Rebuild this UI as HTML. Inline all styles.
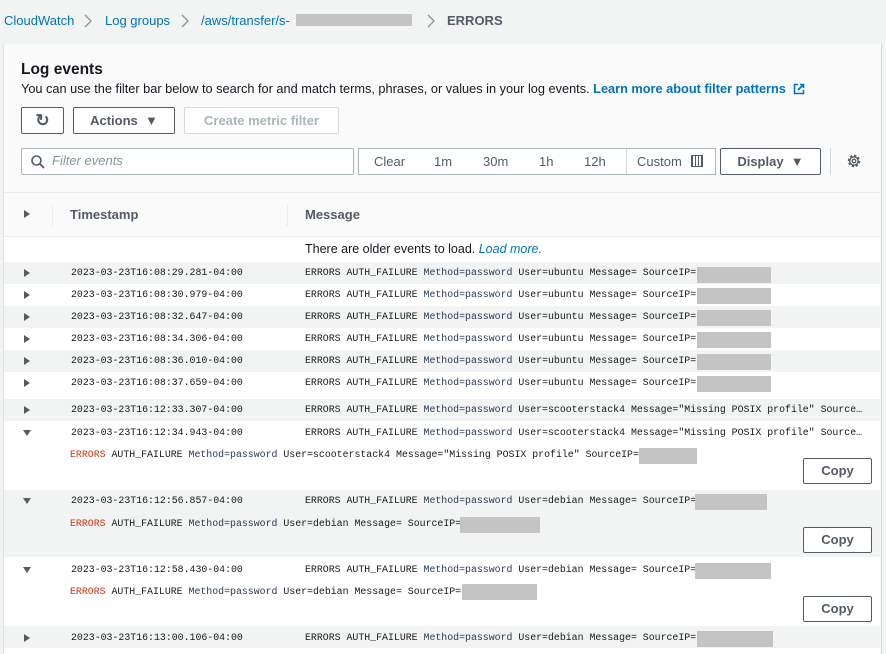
<!DOCTYPE html><html><head><style>
body{margin:0;width:886px;height:654px;overflow:hidden;background:#f2f3f3;font-family:"Liberation Sans",sans-serif;position:relative}
.a{position:absolute}
.bc{top:13px;font-size:13px;color:#0073bb}
.pn{left:3px;top:44px;width:877px;height:610px;background:#fafafa;border-left:1px solid #e1e4e4;border-right:1px solid #d5dbdb}
.btn{position:absolute;border:1px solid #545b64;border-radius:2px;background:#fff;box-sizing:border-box;font-weight:bold;font-size:13px;color:#545b64;text-align:center}
.row{position:absolute;left:4px;width:876px;height:22px}
.g{background:#f2f3f3}.w{background:#fff}
.m{font-family:"Liberation Mono",monospace;font-size:9.9px;color:#16191f;position:absolute;white-space:pre}
.tri{position:absolute;left:24px;width:0;height:0;border-top:4px solid transparent;border-bottom:4px solid transparent;border-left:6px solid #545b64}
.tdn{position:absolute;left:23px;width:0;height:0;border-left:4px solid transparent;border-right:4px solid transparent;border-top:6px solid #545b64}
.red{position:absolute;background:#c4c4c4;height:16px}
.cp{position:absolute;left:803px;width:69px;height:26px;border:1px solid #545b64;border-radius:2px;background:#fff;box-sizing:border-box;font-weight:bold;font-size:13px;color:#545b64;text-align:center;line-height:24px}
.e{color:#d13212}.b{color:#2a3a55}
.ch{position:absolute;top:14px}
</style></head><body>
<div class="a bc" style="left:4px">CloudWatch</div>
<svg class="ch" style="left:84px" width="8" height="14"><path d="M1 1 L7 7 L1 13" fill="none" stroke="#879596" stroke-width="1.3"/></svg>
<div class="a bc" style="left:105px">Log groups</div>
<svg class="ch" style="left:181px" width="8" height="14"><path d="M1 1 L7 7 L1 13" fill="none" stroke="#879596" stroke-width="1.3"/></svg>
<div class="a bc" style="left:201px">/aws/transfer/s-</div>
<div class="a" style="left:296px;top:14px;width:116px;height:12px;background:#c4c4c4"></div>
<svg class="ch" style="left:427px" width="8" height="14"><path d="M1 1 L7 7 L1 13" fill="none" stroke="#879596" stroke-width="1.3"/></svg>
<div class="a bc" style="left:447px;color:#545b64;font-weight:bold">ERRORS</div>
<div class="a pn"></div>
<div class="a" style="left:21px;top:61px;font-size:15.5px;font-weight:bold;color:#16191f">Log events</div>
<div class="a" style="left:21px;top:81px;font-size:12.75px;color:#16191f;white-space:nowrap">You can use the filter bar below to search for and match terms, phrases, or values in your log events. <b style="color:#0073bb">Learn more about filter patterns</b></div>
<svg class="a" style="left:793px;top:83px" width="12" height="12"><path d="M5 1.5H1.5V10.5H10.5V7" fill="none" stroke="#0073bb" stroke-width="1.6"/><path d="M7 1.5H10.5V5M10.5 1.5L5 7" fill="none" stroke="#0073bb" stroke-width="1.6"/></svg>
<div class="btn" style="left:21px;top:107px;width:43px;height:27px;line-height:25px;font-size:17px">↻</div>
<div class="btn" style="left:73px;top:107px;width:102px;height:27px;line-height:25px">Actions &nbsp;▼</div>
<div class="btn" style="left:184px;top:107px;width:155px;height:27px;line-height:25px;border-color:#d5dbdb;color:#aab7b8">Create metric filter</div>
<div class="a" style="left:21px;top:148px;width:333px;height:27px;border:1px solid #aab7b8;border-radius:2px;background:#fff;box-sizing:border-box"></div>
<svg class="a" style="left:30px;top:154px" width="16" height="16"><circle cx="6.5" cy="6.5" r="4.5" fill="none" stroke="#545b64" stroke-width="1.6"/><line x1="10" y1="10" x2="14" y2="14" stroke="#545b64" stroke-width="1.8"/></svg>
<div class="a" style="left:52px;top:153px;font-size:13px;font-style:italic;color:#879596">Filter events</div>
<div class="a" style="left:358px;top:148px;width:358px;height:27px;border:1px solid #aab7b8;background:#fff;box-sizing:border-box"></div>
<div class="a" style="left:626px;top:149px;width:1px;height:25px;background:#d5dbdb"></div>
<div class="a" style="top:154px;left:374px;font-size:13px;color:#545b64">Clear</div>
<div class="a" style="top:154px;left:434px;font-size:13px;color:#545b64">1m</div>
<div class="a" style="top:154px;left:483px;font-size:13px;color:#545b64">30m</div>
<div class="a" style="top:154px;left:539px;font-size:13px;color:#545b64">1h</div>
<div class="a" style="top:154px;left:584px;font-size:13px;color:#545b64">12h</div>
<div class="a" style="top:154px;left:637px;font-size:13px;color:#545b64">Custom</div>
<div class="a" style="left:691px;top:155px;width:10px;height:10px;border:1px solid #545b64;background:repeating-linear-gradient(90deg,#545b64 0 1px,#fff 1px 3px)"></div>
<div class="btn" style="left:720px;top:148px;width:101px;height:27px;line-height:25px">Display &nbsp;▼</div>
<div class="a" style="left:830px;top:148px;width:1px;height:27px;background:#d5dbdb"></div>
<svg class="a" style="left:846px;top:153px" width="16" height="16"><circle cx="8" cy="8" r="5" fill="none" stroke="#545b64" stroke-width="2.4" stroke-dasharray="2.2 1.7"/><circle cx="8" cy="8" r="4.2" fill="none" stroke="#545b64" stroke-width="1.3"/><circle cx="8" cy="8" r="1.8" fill="none" stroke="#545b64" stroke-width="1.3"/></svg>
<div class="a" style="left:4px;top:192px;width:876px;height:1px;background:#eaeded"></div>
<div class="tri" style="top:210px"></div>
<div class="a" style="left:52px;top:204px;width:1px;height:22px;background:#eaeded"></div>
<div class="a" style="left:70px;top:207px;font-size:13px;font-weight:bold;color:#545b64">Timestamp</div>
<div class="a" style="left:287px;top:204px;width:1px;height:22px;background:#eaeded"></div>
<div class="a" style="left:305px;top:207px;font-size:13px;font-weight:bold;color:#545b64">Message</div>
<div class="row w" style="top:236px;height:26px;border-top:1px solid #eaeded"></div>
<div class="a" style="left:305px;top:242px;font-size:12.5px;color:#16191f">There are older events to load. <i style="color:#0073bb">Load more.</i></div>

<div class="row g" style="top:262px"></div><div class="tri" style="top:269px"></div><div class="m" style="left:71px;top:267px">2023-03-23T16:08:29.281-04:00</div><div class="m" style="left:305px;top:267px">ERRORS AUTH_FAILURE <span class="b">Method=password</span> User=ubuntu Message= SourceIP=</div><div class="red" style="left:697px;top:267px;width:74px"></div>
<div class="row w" style="top:284px"></div><div class="tri" style="top:291px"></div><div class="m" style="left:71px;top:289px">2023-03-23T16:08:30.979-04:00</div><div class="m" style="left:305px;top:289px">ERRORS AUTH_FAILURE <span class="b">Method=password</span> User=ubuntu Message= SourceIP=</div><div class="red" style="left:697px;top:288px;width:74px"></div>
<div class="row g" style="top:306px"></div><div class="tri" style="top:313px"></div><div class="m" style="left:71px;top:311px">2023-03-23T16:08:32.647-04:00</div><div class="m" style="left:305px;top:311px">ERRORS AUTH_FAILURE <span class="b">Method=password</span> User=ubuntu Message= SourceIP=</div><div class="red" style="left:697px;top:310px;width:74px"></div>
<div class="row w" style="top:328px"></div><div class="tri" style="top:335px"></div><div class="m" style="left:71px;top:333px">2023-03-23T16:08:34.306-04:00</div><div class="m" style="left:305px;top:333px">ERRORS AUTH_FAILURE <span class="b">Method=password</span> User=ubuntu Message= SourceIP=</div><div class="red" style="left:697px;top:332px;width:74px"></div>
<div class="row g" style="top:350px"></div><div class="tri" style="top:357px"></div><div class="m" style="left:71px;top:355px">2023-03-23T16:08:36.010-04:00</div><div class="m" style="left:305px;top:355px">ERRORS AUTH_FAILURE <span class="b">Method=password</span> User=ubuntu Message= SourceIP=</div><div class="red" style="left:697px;top:354px;width:74px"></div>
<div class="row w" style="top:372px;height:27px"></div><div class="tri" style="top:379px"></div><div class="m" style="left:71px;top:377px">2023-03-23T16:08:37.659-04:00</div><div class="m" style="left:305px;top:377px">ERRORS AUTH_FAILURE <span class="b">Method=password</span> User=ubuntu Message= SourceIP=</div><div class="red" style="left:697px;top:376px;width:74px"></div>
<div class="row g" style="top:399px"></div><div class="tri" style="top:406px"></div><div class="m" style="left:71px;top:404px">2023-03-23T16:12:33.307-04:00</div><div class="m" style="left:305px;top:404px">ERRORS AUTH_FAILURE <span class="b">Method=password</span> User=scooterstack4 Message="Missing POSIX profile" Source…</div>
<div class="row w" style="top:421px;height:69px"></div><div class="tdn" style="top:430px"></div><div class="m" style="left:71px;top:427px">2023-03-23T16:12:34.943-04:00</div><div class="m" style="left:305px;top:427px">ERRORS AUTH_FAILURE <span class="b">Method=password</span> User=scooterstack4 Message="Missing POSIX profile" Source…</div>
<div class="m" style="left:70px;top:449px"><span class="e">ERRORS</span> AUTH_FAILURE <span class="b">Method=password</span> User=scooterstack4 Message="Missing POSIX profile" SourceIP=</div><div class="red" style="left:639px;top:448px;width:58px"></div>
<div class="cp" style="top:458px">Copy</div>
<div class="row g" style="top:490px;height:67px"></div><div class="tdn" style="top:498px"></div><div class="m" style="left:71px;top:495px">2023-03-23T16:12:56.857-04:00</div><div class="m" style="left:305px;top:495px">ERRORS AUTH_FAILURE <span class="b">Method=password</span> User=debian Message= SourceIP=</div><div class="red" style="left:695px;top:494px;width:72px"></div>
<div class="m" style="left:70px;top:518px"><span class="e">ERRORS</span> AUTH_FAILURE <span class="b">Method=password</span> User=debian Message= SourceIP=</div><div class="red" style="left:460px;top:517px;width:80px"></div>
<div class="cp" style="top:527px">Copy</div>
<div class="row w" style="top:557px;height:69px"></div><div class="tdn" style="top:567px"></div><div class="m" style="left:71px;top:564px">2023-03-23T16:12:58.430-04:00</div><div class="m" style="left:305px;top:564px">ERRORS AUTH_FAILURE <span class="b">Method=password</span> User=debian Message= SourceIP=</div><div class="red" style="left:695px;top:563px;width:76px"></div>
<div class="m" style="left:70px;top:586px"><span class="e">ERRORS</span> AUTH_FAILURE <span class="b">Method=password</span> User=debian Message= SourceIP=</div><div class="red" style="left:462px;top:584px;width:75px"></div>
<div class="cp" style="top:596px">Copy</div>
<div class="row g" style="top:626px;height:22px"></div><div class="tri" style="top:634px"></div><div class="m" style="left:71px;top:632px">2023-03-23T16:13:00.106-04:00</div><div class="m" style="left:305px;top:632px">ERRORS AUTH_FAILURE <span class="b">Method=password</span> User=debian Message= SourceIP=</div><div class="red" style="left:697px;top:631px;width:76px"></div>
<div class="row w" style="top:648px;height:6px"></div>
</body></html>
